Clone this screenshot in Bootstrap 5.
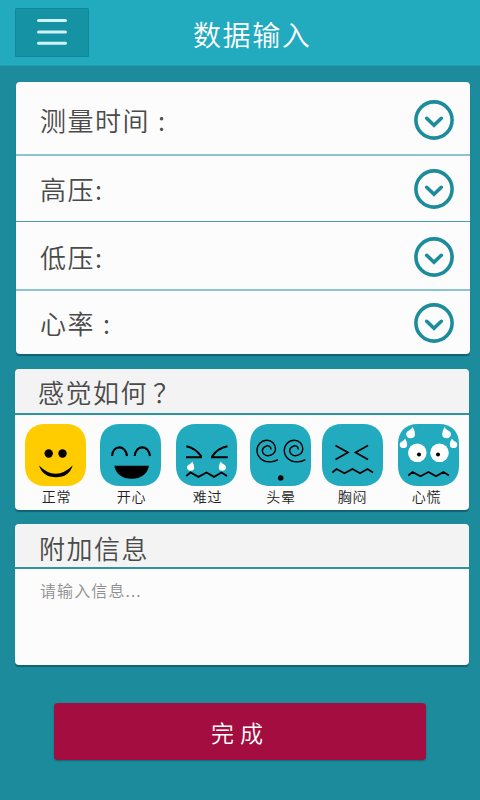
<!DOCTYPE html>
<html lang="zh-CN">
<head>
<meta charset="utf-8">
<meta name="viewport" content="width=device-width, initial-scale=1">
<title>数据输入</title>
<link href="https://cdn.jsdelivr.net/npm/bootstrap@5.3.0/dist/css/bootstrap.min.css" rel="stylesheet">
<style>
  body { width: 480px; height: 800px; overflow: hidden; background: #1c8c9c; color: #4a4a4a; font-family: "Noto Sans CJK SC", sans-serif; font-weight: 350; }
  .topbar { height: 66px; background: #22aabf; border-bottom: 1px solid #209fb3; }
  .menu-btn { width: 74px; height: 49px; margin: 8px 0 0 15px; background: #1692a5; border: 1px solid #138697; border-radius: 1px; }
  .menu-btn svg { margin-bottom: 2px; }
  .page-title { font-size: 28px; letter-spacing: 1.6px; line-height: 40px; margin: 14px 0 0 104px; font-weight: 350; }
  .panel { width: 454px; background: #fcfcfc; border: 0; border-radius: 4px; box-shadow: 0 2px 1px #0f6371; overflow: hidden; }
  .panel-fields { margin: 16px 0 0 16px; height: 272px; }
  .panel-feel { margin: 15px 0 0 15px; height: 141px; }
  .panel-note { margin: 14px 0 0 15px; height: 141px; }
  .field { padding: 0 16px 0 24px; font-size: 26px; font-weight: 350; letter-spacing: 1.5px; line-height: 40px; background: transparent; color: inherit; border: 0; border-bottom: 1px solid #4a9faa; border-radius: 0; }
  .field-a { height: 74px; border-bottom: 2px solid #8ac4cc; padding-top: 3px; }
  .field-b { height: 66px; padding-top: 1px; }
  .field-c { height: 69px; border-bottom: 2px solid #8ac4cc; padding-top: 2px; }
  .field-d { height: 63px; border-bottom: 0; }
  .colon { margin-left: 8px; }
  .question { margin-left: 5px; }
  .panel-head { height: 46px; background: #f3f3f3; border-bottom: 2px solid #2f93a2; border-radius: 0; font-size: 26px; letter-spacing: 1.5px; line-height: 44px; padding: 1px 0 0 23px; }
  .panel-note .panel-head { height: 45px; padding-top: 2px; padding-left: 24px; }
  .faces { display: grid; grid-template-columns: 75px 76px 73.5px 72.5px 75.5px 61px; padding: 9px 0 0 10px; }
  .face { width: 61px; }
  .face svg { display: block; width: 61px; height: 62px; }
  .face-label { font-size: 14px; letter-spacing: .8px; line-height: 20px; padding-left: 2px; color: #222; text-align: center; white-space: nowrap; }
  .face:nth-child(5) .face-label { padding-left: 0; }
  .face:last-child .face-label { padding: 0 3px 0 0; }
  .note-input { font-size: 16px; letter-spacing: 1.1px; padding: 8px 25px; line-height: 26px; color: #999; background: transparent; border: 0; resize: none; height: 94px; font-weight: 350; }
  .note-input::placeholder { color: #8f8f8f; opacity: 1; }
  .done-btn { width: 372px; height: 57px; margin: 38px 0 0 54px; background: #a30d3f; color: #fff; border: 0; border-radius: 4px; box-shadow: 0 1px 2px #0f6371; font-size: 23px; letter-spacing: 6px; font-weight: 350; line-height: 56px; padding: 0; }
</style>
<script src="https://cdn.jsdelivr.net/npm/bootstrap@5.3.0/dist/js/bootstrap.bundle.min.js"></script>
</head>
<body>
<svg width="0" height="0" class="d-none">
  <defs>
  <symbol id="chev" viewBox="0 0 40 40"><circle cx="20" cy="20" r="18.1" fill="none" stroke="#1c8c9c" stroke-width="3.6"/><path d="M12.700 18.300 20 25.200l7.300-6.900" fill="none" stroke="#1c8c9c" stroke-width="3.600" stroke-linecap="round"/></symbol>
  <symbol id="tile" viewBox="0 0 61 62"><path d="M20 0H41C54 0 61 8 61 20V42C61 54 54 62 41 62H20C7 62 0 54 0 42V20C0 8 7 0 20 0Z"/></symbol>
  <path id="drop" d="M1.800-6Q4.300-2.500 4.300 1.500C4.300 4 2.500 5.200 0 5.200C-2.800 5.200-4.500 3.500-4.500 1.200C-4.500-1-3-2-1.200-2.800Q1-4 1.800-6Z"/>
  <path id="swirl" d="M15.500 22.500C18 20.800 21 22.500 21 25.500M15.500 22.500A4.500 5 0 0 0 12.300 26.500A5.700 5.400 0 0 0 18 31.700A7.500 6.700 0 0 0 25.500 25A8.500 8.700 0 0 0 17 16.300A10 10.200 0 0 0 7 26.500A12 11.300 0 0 0 19 37.800Q24 38.200 28 35.700"/>
  </defs>
</svg>
<header class="topbar d-flex align-items-start">
  <button class="menu-btn p-0 d-flex align-items-center justify-content-center" aria-label="菜单">
    <svg width="30" height="28" viewBox="0 0 30 28" stroke="#d0f3f7" stroke-width="3" stroke-linecap="round"><path d="M1.500 2.500h27M1.500 14h27M1.500 25.300h27"/></svg>
  </button>
  <h1 class="page-title text-white mb-0">数据输入</h1>
</header>
<main>
  <section class="card panel panel-fields">
    <button class="field field-a d-flex align-items-center justify-content-between"><span>测量时间<span class="colon">:</span></span><svg width="40" height="40"><use href="#chev"/></svg></button>
    <button class="field field-b d-flex align-items-center justify-content-between"><span>高压:</span><svg width="40" height="40"><use href="#chev"/></svg></button>
    <button class="field field-c d-flex align-items-center justify-content-between"><span>低压:</span><svg width="40" height="40"><use href="#chev"/></svg></button>
    <button class="field field-d d-flex align-items-center justify-content-between"><span>心率<span class="colon">:</span></span><svg width="40" height="40"><use href="#chev"/></svg></button>
  </section>

  <section class="card panel panel-feel">
    <div class="card-header panel-head">感觉如何<span class="question">？</span></div>
    <div class="faces">
      <div class="face">
        <svg viewBox="0 0 61 62"><use href="#tile" fill="#ffcc00"/><circle cx="23.700" cy="29.500" r="4.200"/><circle cx="37.500" cy="29.500" r="4.200"/><path d="M14 41.500Q30.500 58 47.700 41.500Q44 53.300 31 53.300Q18 53.300 14 41.500Z"/></svg>
        <div class="face-label">正常</div>
      </div>
      <div class="face">
        <svg viewBox="0 0 61 62"><use href="#tile" fill="#22aabf"/><path d="M12 32C13 20.500 25.500 20.500 27 32M34.700 32C36 20.500 48.500 20.500 50 32" fill="none" stroke="#000" stroke-width="2.200"/><path d="M14.300 41.700H49C47.500 50 41 54.700 31.500 54.700C22 54.700 15.800 50 14.300 41.700Z"/></svg>
        <div class="face-label">开心</div>
      </div>
      <div class="face">
        <svg viewBox="0 0 61 62"><use href="#tile" fill="#22aabf"/><path d="M10.300 22.300Q19 24 25.500 32.500M10 33.200H26M51.500 22.300Q42 24 36 32.500M35 33.200H51.800M10.300 52L14.500 48.500 22.500 52.800 30.500 48.500 38 52.800 45.500 48.500 51 52" fill="none" stroke="#000" stroke-width="1.900"/><g fill="#fff"><use href="#drop" transform="translate(14.700 42.500) scale(.82)"/><use href="#drop" transform="translate(46.300 42.500) scale(-.82 .82)"/></g></svg>
        <div class="face-label">难过</div>
      </div>
      <div class="face">
        <svg viewBox="0 0 61 62"><use href="#tile" fill="#22aabf"/><g fill="none" stroke="#000" stroke-width="1.400"><use href="#swirl"/><use href="#swirl" transform="translate(27.300 0)"/></g><circle cx="30.700" cy="54" r="2.800"/></svg>
        <div class="face-label">头晕</div>
      </div>
      <div class="face">
        <svg viewBox="0 0 61 62"><use href="#tile" fill="#22aabf"/><path d="M13.500 21.500 26 28.500 13.500 35.500M46 21.500 33.500 28.500 46 35.500M10.300 48.500L14.500 45 22.500 49.300 30.500 45 38 49.300 45.500 45 51 48.500" fill="none" stroke="#000" stroke-width="1.700"/></svg>
        <div class="face-label">胸闷</div>
      </div>
      <div class="face">
        <svg viewBox="0 0 61 62"><use href="#tile" fill="#22aabf"/><g fill="#fff"><circle cx="19.300" cy="28.800" r="9.300"/><circle cx="41.500" cy="28.800" r="9.300"/><use href="#drop" transform="translate(12.700 9)"/><use href="#drop" transform="translate(48.500 9) scale(-1 1)"/><use href="#drop" transform="translate(5.500 19.700) scale(.85)"/><use href="#drop" transform="translate(55.500 19.700) scale(-.85 .85)"/></g><circle cx="21" cy="30.500" r="2"/><circle cx="40" cy="30.500" r="2"/><path d="M10.300 51.500L14.500 48 22.500 52.300 30.500 48 38 52.300 45.500 48 51 51.500" fill="none" stroke="#000" stroke-width="1.700"/></svg>
        <div class="face-label">心慌</div>
      </div>
    </div>
  </section>

  <section class="card panel panel-note">
    <div class="card-header panel-head">附加信息</div>
    <textarea class="form-control note-input" placeholder="请输入信息..."></textarea>
  </section>

  <button class="btn done-btn">完成</button>
</main>
</body>
</html>
